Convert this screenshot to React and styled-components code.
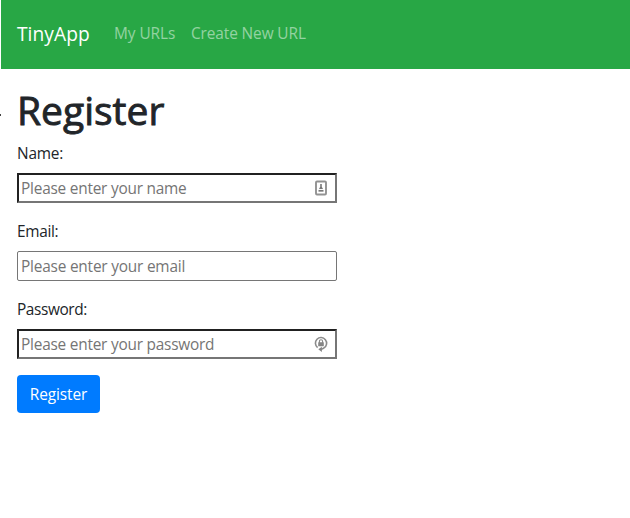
import React from "react";
import styled, { createGlobalStyle } from "styled-components";

const GlobalStyle = createGlobalStyle`
  *, *::before, *::after { box-sizing: border-box; }
  body {
    margin: 0;
    background: #fff;
    color: #212529;
    font-family: "Segoe UI", "Open Sans", "Noto Sans", sans-serif;
    font-size: 15.4px;
    line-height: 24px;
  }
`;

const Page = styled.div`
  position: relative;
  min-height: 518px;
  padding-left: 1px;
  overflow: hidden;
`;

const EdgeMark = styled.span`
  position: absolute;
  left: 0;
  top: 114px;
  width: 1px;
  height: 2px;
  background: #444;
`;

const Navbar = styled.nav`
  display: flex;
  align-items: center;
  height: 69px;
  padding: 0 16px 1px;
  background: #28a745;
`;

const Brand = styled.a`
  width: 73px;
  margin-right: 24px;
  color: #fff;
  font-size: 19.2px;
  line-height: 30px;
  letter-spacing: 0.05px;
  white-space: nowrap;
`;

const NavLinks = styled.div`
  display: flex;
  gap: 16px;
`;

const NavLink = styled.a`
  width: ${(p) => p.$width}px;
  color: rgba(255, 255, 255, 0.5);
  letter-spacing: ${(p) => p.$tracking}px;
  white-space: nowrap;
`;

const Content = styled.main`
  padding: 16px;
`;

const Title = styled.h1`
  margin: 0 0 8px;
  padding-top: 1px;
  height: 48px;
  font-size: 39px;
  line-height: 48px;
  font-weight: 500;
  -webkit-text-stroke: 0.9px #212529;
`;

const Form = styled.form`
  display: flex;
  flex-direction: column;
  align-items: flex-start;
  gap: 16px;
`;

const Field = styled.div`
  display: flex;
  flex-direction: column;
  gap: 8px;
`;

const Label = styled.label`
  height: 24px;
  padding-top: 1px;
  letter-spacing: ${(p) => p.$tracking}px;
`;

const InputFrame = styled.div`
  display: flex;
  align-items: center;
  width: 320px;
  height: 30px;
  padding: 0 ${(p) => (p.$inset ? 7 : 1)}px 0 ${(p) => (p.$inset ? 2 : 3)}px;
  border: ${(p) => (p.$inset ? "2px solid" : "1px solid #767676")};
  border-color: ${(p) => (p.$inset ? "#212121 #767676 #767676 #212121" : "#767676")};
  border-radius: ${(p) => (p.$inset ? 0 : 2)}px;
  background: #fff;
`;

const Input = styled.input`
  flex: 1;
  min-width: 0;
  height: 26px;
  padding: 0;
  border: 0;
  outline: 0;
  background: transparent;
  color: #212529;
  font: inherit;
  letter-spacing: ${(p) => p.$tracking}px;
  &::placeholder { color: #757575; opacity: 1; }
`;

const Button = styled.button`
  width: 83px;
  height: 38px;
  padding: 2px 0 0;
  border: 0;
  border-radius: 4px;
  background: #007bff;
  color: #fff;
  font: inherit;
  letter-spacing: ${(p) => p.$tracking}px;
`;

const Icon = styled.svg`
  flex: none;
  width: 14px;
  height: 18px;
`;

const ContactIcon = () => (
  <Icon viewBox="0 0 14 18" fill="none">
    <rect x="2" y="2.5" width="10" height="13" rx="1" stroke="#929292" strokeWidth="1.9" />
    <path d="M6.2 5h1.6v2.7l1.2 2.2H5l1.2-2.2z" fill="#777" />
    <path d="M4.5 11.8h5" stroke="#777" strokeWidth="1.7" />
  </Icon>
);

const LockIcon = () => (
  <Icon viewBox="0 0 14 18" fill="none">
    <path d="M3.6 12.6A5.6 5.6 0 1 1 10 12.9Q8.8 13.9 7 14.2" stroke="#8b8b8b" strokeWidth="1.6" />
    <path d="M7.9 11.7v5.2L4.3 14.3z" fill="#858585" />
    <path d="M5.4 8V6.3a1.6 1.6 0 0 1 3.2 0V8" stroke="#858585" strokeWidth="1.1" />
    <rect x="4.2" y="7.2" width="5.6" height="4" rx=".5" fill="#858585" />
  </Icon>
);

const fields = [
  { id: "name", label: "Name:", type: "text", hint: "Please enter your name", labelTracking: -0.2, tracking: -0.22, icon: <ContactIcon /> },
  { id: "email", label: "Email:", type: "email", hint: "Please enter your email", labelTracking: -0.3, tracking: -0.2 },
  { id: "password", label: "Password:", type: "password", hint: "Please enter your password", labelTracking: -0.4, tracking: -0.22, icon: <LockIcon /> },
];

export default function App() {
  return (
    <Page>
      <GlobalStyle />
      <Navbar>
        <Brand>TinyApp</Brand>
        <NavLinks>
          <NavLink $width={61} $tracking={-0.05}>My URLs</NavLink>
          <NavLink $width={115} $tracking={-0.1}>Create New URL</NavLink>
        </NavLinks>
      </Navbar>
      <EdgeMark />
      <Content>
        <Title>Register</Title>
        <Form>
          {fields.map((f) => (
            <Field key={f.id}>
              <Label htmlFor={f.id} $tracking={f.labelTracking}>{f.label}</Label>
              <InputFrame $inset={Boolean(f.icon)}>
                <Input id={f.id} type={f.type} placeholder={f.hint} $tracking={f.tracking} />
                {f.icon}
              </InputFrame>
            </Field>
          ))}
          <Button type="button" $tracking={-0.1}>Register</Button>
        </Form>
      </Content>
    </Page>
  );
}
